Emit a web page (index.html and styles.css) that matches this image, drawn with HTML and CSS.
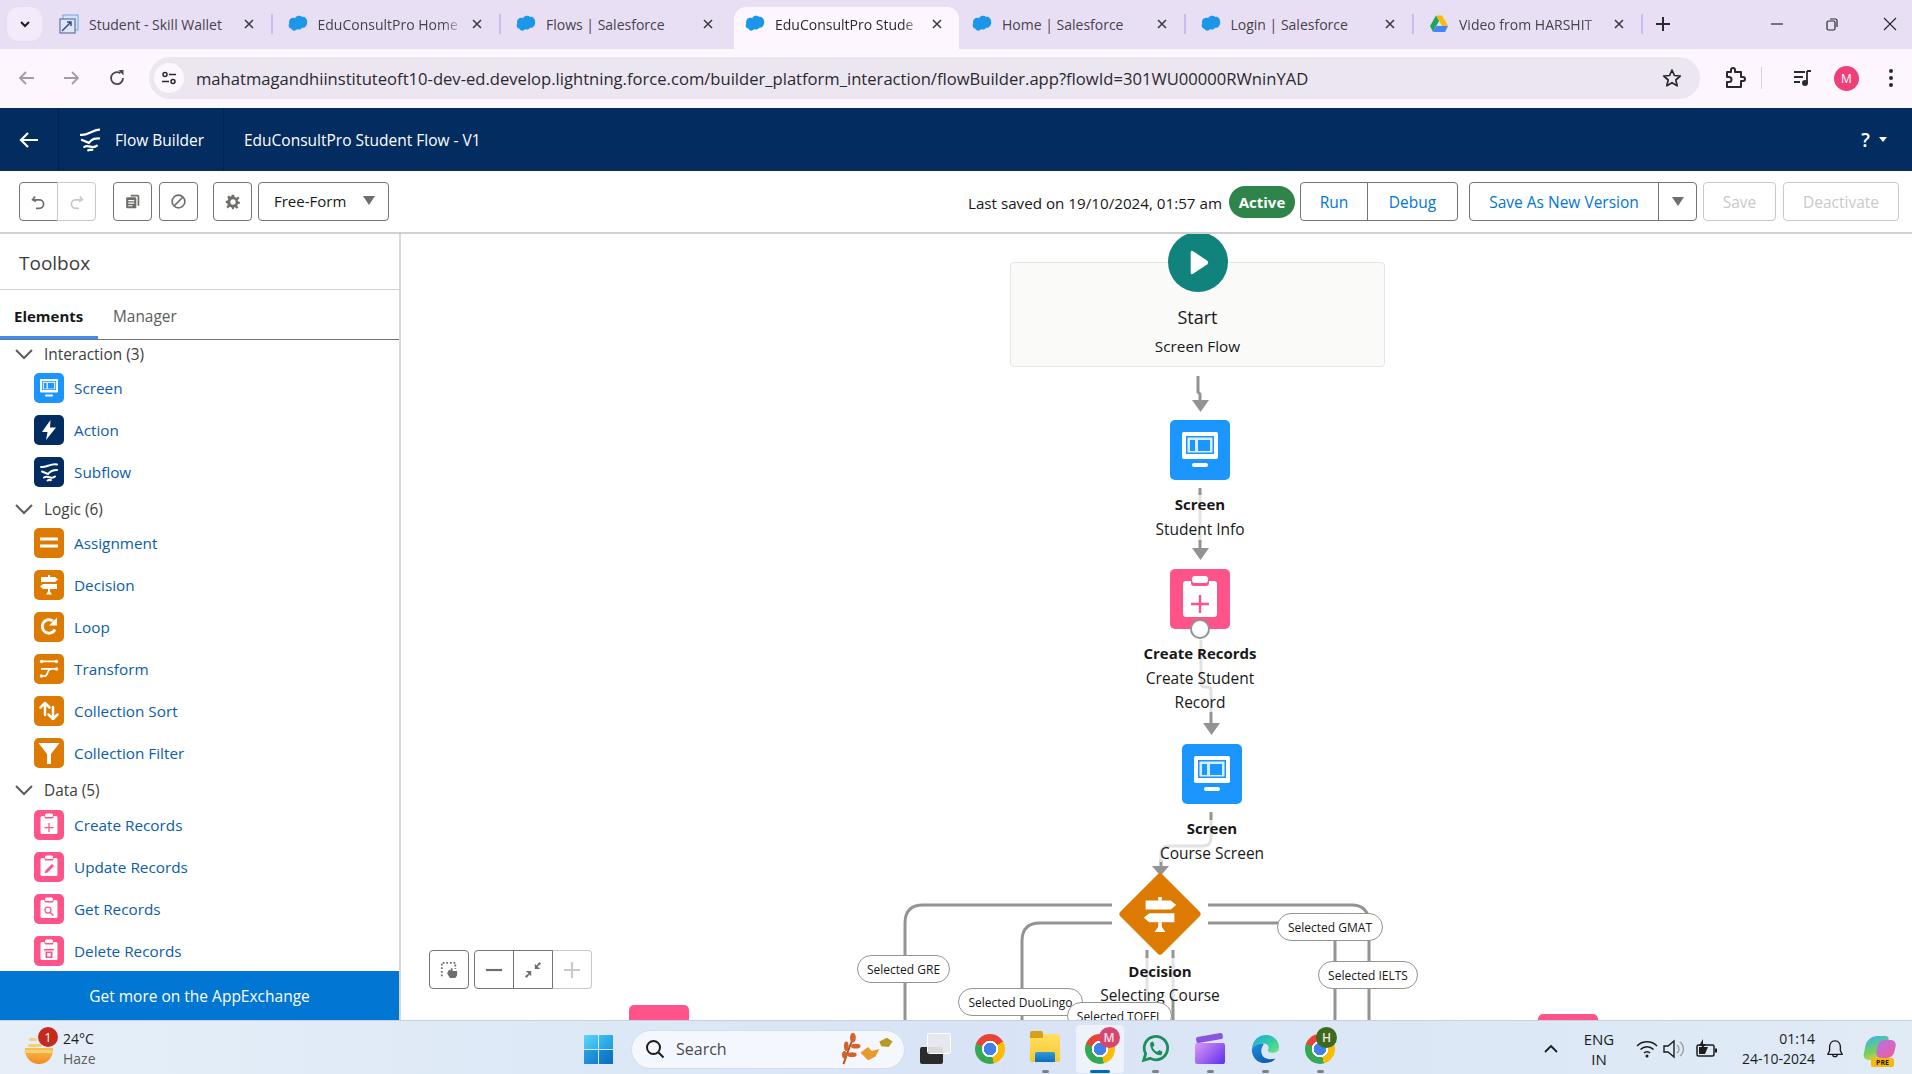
FILE: index.html
```html
<!DOCTYPE html>
<html lang="en">
<head>
<meta charset="utf-8">
<title>EduConsultPro Student Flow</title>
<link rel="stylesheet" href="styles.css">
</head>
<body>
<svg class="defs" xmlns="http://www.w3.org/2000/svg">
  <symbol id="i-cloud" viewBox="0 0 24 24"><path fill="#1b96e8" d="M9 4c2 -2.600 6 -2.600 8 -.5c3 -.5 6 2 6 6c0 4 -2 7.500 -6 7c-1.500 2.500 -4.500 2.500 -6 1.500c-2 3 -6 2.500 -7 -.5c-3 -.5 -4 -4 -2.500 -6.500c-1 -3 1.500 -6.500 4.500 -6.500c1 0 2 0 3 .5z"/></symbol>
  <symbol id="i-screen" viewBox="0 0 60 60"><rect x="12" y="12" width="36" height="27" rx="2" fill="#fff"/><rect x="16" y="16" width="28" height="18" fill="#1b96ff"/><rect x="17.500" y="17.500" width="25" height="15" fill="#d8ecff"/><rect x="20" y="20" width="5" height="11" fill="#1b96ff"/><rect x="28" y="20" width="12" height="11" fill="#1b96ff"/><rect x="22" y="43" width="16" height="4" rx="2" fill="#fff"/></symbol>
  <symbol id="i-bolt" viewBox="0 0 60 60"><path fill="#fff" d="M33 10 L16 34 H27 L24 50 L44 25 H32 Z"/></symbol>
  <symbol id="i-subflow" viewBox="0 0 60 60"><g fill="none" stroke="#fff" stroke-width="4" stroke-linecap="round"><path d="M14 20 C24 22 34 12 46 15"/><path d="M16 29 L28 34 C34 26 40 26 46 26"/><path d="M20 41 C28 36 34 46 42 39"/><path d="M27 47 C30 45 32 47 34 46"/></g></symbol>
  <symbol id="i-equals" viewBox="0 0 60 60"><rect x="12" y="19" width="36" height="6" fill="#fff"/><rect x="12" y="33" width="36" height="6" fill="#fff"/></symbol>
  <symbol id="i-decision" viewBox="0 0 60 60"><g fill="#fff"><rect x="28" y="10" width="4" height="4"/><path d="M14 14 H42 L48 19 L42 24 H14 Z"/><path d="M18 28 H46 V38 H18 L12 33 Z"/><rect x="28" y="38" width="4" height="6"/><path d="M28 43 H32 L36 49 H24 Z"/></g></symbol>
  <symbol id="i-loop" viewBox="0 0 60 60"><path fill="none" stroke="#fff" stroke-width="6" d="M42 35 A13.500 13.500 0 1 1 38 18"/><path fill="#fff" d="M46 11 V27 H30 Z"/></symbol>
  <symbol id="i-transform" viewBox="0 0 60 60"><g fill="#fff"><rect x="14" y="13" width="32" height="3.500"/><rect x="14" y="28" width="32" height="3.500"/><circle cx="15" cy="15" r="3.500"/><circle cx="45" cy="15" r="3.500"/><circle cx="45" cy="30" r="3.500"/><circle cx="15" cy="44" r="3.500"/></g><path fill="none" stroke="#fff" stroke-width="3.500" d="M15 44 H22 C28 44 26 30 34 30"/></symbol>
  <symbol id="i-sort" viewBox="0 0 60 60"><g fill="none" stroke="#fff" stroke-width="5" stroke-linecap="round" stroke-linejoin="round"><path d="M22 38 V14 M13 23 L22 14 L31 23"/><path d="M38 22 V46 M29 37 L38 46 L47 37"/></g></symbol>
  <symbol id="i-filter" viewBox="0 0 60 60"><path fill="#fff" d="M9 10 H51 L34 32 V52 H26 V32 Z"/></symbol>
  <symbol id="i-clip-plus" viewBox="0 0 60 60"><path fill="#fff" d="M13 15 a3 3 0 0 1 3 -3 h5 v2 a3 3 0 0 0 3 3 h12 a3 3 0 0 0 3 -3 v-2 h5 a3 3 0 0 1 3 3 v30 a3 3 0 0 1 -3 3 h-28 a3 3 0 0 1 -3 -3z"/><rect x="22" y="7" width="16" height="7" rx="3" fill="#fff"/><path stroke="#ff538a" stroke-width="2.500" d="M30 26 V44 M21 35 H39"/></symbol>
  <symbol id="i-clip-edit" viewBox="0 0 60 60"><path fill="#fff" d="M13 15 a3 3 0 0 1 3 -3 h5 v2 a3 3 0 0 0 3 3 h12 a3 3 0 0 0 3 -3 v-2 h5 a3 3 0 0 1 3 3 v30 a3 3 0 0 1 -3 3 h-28 a3 3 0 0 1 -3 -3z"/><rect x="22" y="7" width="16" height="7" rx="3" fill="#fff"/><path fill="#ff538a" d="M36 24 L40 28 L27 41 L21 43 L23 37 Z"/></symbol>
  <symbol id="i-clip-search" viewBox="0 0 60 60"><path fill="#fff" d="M13 15 a3 3 0 0 1 3 -3 h5 v2 a3 3 0 0 0 3 3 h12 a3 3 0 0 0 3 -3 v-2 h5 a3 3 0 0 1 3 3 v30 a3 3 0 0 1 -3 3 h-28 a3 3 0 0 1 -3 -3z"/><rect x="22" y="7" width="16" height="7" rx="3" fill="#fff"/><circle cx="28" cy="32" r="6" fill="none" stroke="#ff538a" stroke-width="2.500"/><path stroke="#ff538a" stroke-width="3" d="M32 37 L39 43"/></symbol>
  <symbol id="i-clip-trash" viewBox="0 0 60 60"><path fill="#fff" d="M13 15 a3 3 0 0 1 3 -3 h5 v2 a3 3 0 0 0 3 3 h12 a3 3 0 0 0 3 -3 v-2 h5 a3 3 0 0 1 3 3 v30 a3 3 0 0 1 -3 3 h-28 a3 3 0 0 1 -3 -3z"/><rect x="22" y="7" width="16" height="7" rx="3" fill="#fff"/><path fill="#ff538a" d="M20 26 H40 V29 H20 Z M23 31 H37 V44 H23 Z"/><rect x="26.500" y="34" width="7" height="7" fill="#fff"/></symbol>
  <symbol id="i-x" viewBox="0 0 12 12"><path fill="none" stroke="#3d3a42" stroke-width="1.600" d="M2 2 L10 10 M10 2 L2 10"/></symbol>
  <symbol id="i-chev" viewBox="0 0 18 12"><path fill="none" stroke="#5c5c5c" stroke-width="2" d="M1 2 L9 10 L17 2"/></symbol>
</svg>

<div class="tabstrip">
  <div class="tab-menu"><svg class="tab-menu-icon" viewBox="0 0 12 12"><path fill="none" stroke="#1d1b20" stroke-width="2" d="M2 4 L6 8 L10 4"/></svg></div>
  <div class="tab">
    <svg class="favicon" viewBox="0 0 20 20"><rect x="4" y="1" width="15" height="15" fill="#cfe3fa" stroke="#6ea8e8"/><rect x="1" y="5" width="15" height="14" fill="#dfe6f5" stroke="#4a5a94"/><path d="M3 17 L12 8 M8 8 H12 V12" fill="none" stroke="#3a4a84" stroke-width="1.500"/></svg>
    <span class="tab-text">Student - Skill Wallet</span><svg class="tab-x"><use href="#i-x"/></svg>
  </div>
  <div class="tab">
    <svg class="favicon"><use href="#i-cloud"/></svg><span class="tab-text tab-fade">EduConsultPro Home</span><svg class="tab-x"><use href="#i-x"/></svg>
  </div>
  <div class="tab tab-before-active">
    <svg class="favicon"><use href="#i-cloud"/></svg><span class="tab-text">Flows | Salesforce</span><svg class="tab-x"><use href="#i-x"/></svg>
  </div>
  <div class="tab tab-active">
    <svg class="favicon"><use href="#i-cloud"/></svg><span class="tab-text tab-fade">EduConsultPro Stude</span><svg class="tab-x"><use href="#i-x"/></svg>
  </div>
  <div class="tab">
    <svg class="favicon"><use href="#i-cloud"/></svg><span class="tab-text">Home | Salesforce</span><svg class="tab-x"><use href="#i-x"/></svg>
  </div>
  <div class="tab">
    <svg class="favicon"><use href="#i-cloud"/></svg><span class="tab-text">Login | Salesforce</span><svg class="tab-x"><use href="#i-x"/></svg>
  </div>
  <div class="tab">
    <svg class="favicon" viewBox="0 0 20 20"><path fill="#fbbc04" d="M7 1.500 H13 L19 12 H13 Z"/><path fill="#1fa463" d="M7 1.500 L1 12 L4 18 L10 7 Z"/><path fill="#4285f4" d="M4 18 H16 L19 12 H7.500 Z"/></svg>
    <span class="tab-text tab-fade">Video from HARSHIT</span><svg class="tab-x"><use href="#i-x"/></svg>
  </div>
  <svg class="tab-plus" viewBox="0 0 16 16"><path stroke="#2b2930" stroke-width="2" d="M8 1 V15 M1 8 H15"/></svg>
  <div class="window-controls">
    <svg class="win-btn" viewBox="0 0 16 16"><path stroke="#2b2930" stroke-width="1.200" d="M2 8 H14"/></svg>
    <svg class="win-btn" viewBox="0 0 16 16"><rect x="3" y="5" width="8" height="9" rx="1.500" fill="none" stroke="#2b2930" stroke-width="1.200"/><path fill="none" stroke="#2b2930" stroke-width="1.200" d="M6 3 H11.500 Q13 3 13 4.500 V11"/></svg>
    <svg class="win-btn" viewBox="0 0 16 16"><path stroke="#2b2930" stroke-width="1.200" d="M2 2 L14 14 M14 2 L2 14"/></svg>
  </div>
</div>

<div class="addressbar">
  <svg class="nav-icon nav-back" viewBox="0 0 20 20"><path fill="none" stroke="#a19ca8" stroke-width="1.800" d="M17 10 H3 M9 4 L3 10 L9 16"/></svg>
  <svg class="nav-icon nav-forward" viewBox="0 0 20 20"><path fill="none" stroke="#a19ca8" stroke-width="1.800" d="M3 10 H17 M11 4 L17 10 L11 16"/></svg>
  <svg class="nav-icon nav-reload" viewBox="0 0 20 20"><path fill="none" stroke="#47444d" stroke-width="1.800" d="M16 10 A6 6 0 1 1 13.500 5.200"/><path fill="#47444d" d="M11.500 2 H16.500 V7.500 Z"/></svg>
  <div class="omnibox">
    <div class="site-info"><svg class="site-icon" viewBox="0 0 16 16"><g fill="none" stroke="#2b2930" stroke-width="1.500"><circle cx="4" cy="4.500" r="2"/><path d="M8 4.500 H15 M1 11.500 H8"/><circle cx="12" cy="11.500" r="2"/></g></svg></div>
    <span class="url">mahatmagandhiinstituteoft10-dev-ed.develop.lightning.force.com/builder_platform_interaction/flowBuilder.app?flowId=301WU00000RWninYAD</span>
    <svg class="star" viewBox="0 0 20 20"><path fill="none" stroke="#2b2930" stroke-width="1.700" stroke-linejoin="round" d="M10 2 L12.400 7.500 L18.300 8 L13.800 12 L15.200 17.800 L10 14.700 L4.800 17.800 L6.200 12 L1.700 8 L7.600 7.500 Z"/></svg>
  </div>
  <svg class="ext-icon" viewBox="0 0 24 24"><path fill="none" stroke="#2b2930" stroke-width="2" stroke-linejoin="round" d="M5 6 H9 V4 A2 2 0 0 1 13 4 V6 H19 V11 H21 A2 2 0 0 1 21 15 H19 V21 H5 V16 H7 A2 2 0 0 0 7 11 H5 Z"/></svg>
  <span class="addr-sep"></span>
  <svg class="media-icon" viewBox="0 0 20 20"><path stroke="#2b2930" stroke-width="1.800" d="M1 4 H12 M1 9 H10 M1 14 H7"/><path stroke="#2b2930" stroke-width="1.800" d="M14 3 V14 M14 3 H18"/><circle cx="12" cy="15" r="3" fill="#2b2930"/></svg>
  <div class="avatar">M</div>
  <svg class="menu-dots" viewBox="0 0 6 20"><g fill="#2b2930"><circle cx="3" cy="3" r="2"/><circle cx="3" cy="10" r="2"/><circle cx="3" cy="17" r="2"/></g></svg>
</div>

<header class="app-header">
  <div class="hdr-back"><svg class="hdr-back-icon" viewBox="0 0 20 20"><path fill="none" stroke="#fff" stroke-width="2.200" d="M19 10 H2 M9 3 L2 10 L9 17"/></svg></div>
  <div class="hdr-brand"><svg class="hdr-brand-icon" viewBox="14 8 32 42"><g fill="none" stroke="#fff" stroke-width="4" stroke-linecap="round"><path d="M14 20 C24 22 34 12 46 11"/><path d="M16 29 L28 34 C34 26 40 26 46 26"/><path d="M20 41 C28 36 34 46 42 39"/><path d="M27 47 C30 45 32 47 34 46"/></g></svg><span>Flow Builder</span></div>
  <div class="hdr-title">EduConsultPro Student Flow - V1</div>
  <div class="hdr-help"><span class="hdr-q">?</span><span class="hdr-caret"></span></div>
</header>

<div class="toolbar">
  <div class="btn-group">
    <button class="tool tool-39"><svg class="tool-icon" viewBox="0 0 20 20"><path fill="none" stroke="#706e6b" stroke-width="2" d="M6 4 L3 8 L7 10 M3.500 8 H11 A5 5 0 0 1 11 18 H7"/></svg></button>
    <button class="tool tool-39 tool-off"><svg class="tool-icon" viewBox="0 0 20 20"><path fill="none" stroke="#c9c9c9" stroke-width="2" d="M14 4 L17 8 L13 10 M16.500 8 H9 A5 5 0 0 0 9 18 H13"/></svg></button>
  </div>
  <button class="tool tool-39 tool-solo tool-gap-17"><svg class="tool-icon" viewBox="0 0 20 20"><path fill="#706e6b" d="M8 2 H16 Q18 2 18 4 V15 H16 V4 H8 Z"/><path fill="#706e6b" d="M4 5 H13 Q14.500 5 14.500 6.500 V18 H4 Q2.500 18 2.500 16.500 V6.500 Q2.500 5 4 5 Z"/><path stroke="#fff" stroke-width="1.400" d="M5 9 H12 M5 12 H12 M5 15 H10"/></svg></button>
  <button class="tool tool-39 tool-solo tool-gap-7"><svg class="tool-icon" viewBox="0 0 20 20"><circle cx="10" cy="10" r="7.500" fill="none" stroke="#706e6b" stroke-width="2"/><path stroke="#706e6b" stroke-width="2" d="M15 5 L5 15"/></svg></button>
  <button class="tool tool-39 tool-solo tool-gap-15"><svg class="tool-icon tool-gear" viewBox="0 0 20 20"><path fill="#706e6b" d="M8.500 1 H11.500 L12 3.700 L14.300 4.700 L16.600 3.100 L18 5.500 L16 7.300 V9 L18.700 10 V12 L16 12.700 L15.200 14.800 L16.700 17 L14.500 18.500 L12.500 16.500 H11.500 L11 19 H9 L8 16.500 L5.800 16 L3.500 18 L1.800 16 L3.500 13.800 L3 12 L1 11 V8.500 L3.500 8 L4 5.800 L2.800 3.500 L5 2 L7.300 3.800 Z"/><circle cx="10" cy="10" r="3.300" fill="#fff"/></svg></button>
  <button class="select"><span>Free-Form</span><i class="caret"></i></button>
  <div class="toolbar-right">
    <span class="saved">Last saved on 19/10/2024, 01:57 am</span>
    <span class="badge">Active</span>
    <div class="btn-group group-run">
      <button class="brand-btn w-run">Run</button>
      <button class="brand-btn w-debug">Debug</button>
    </div>
    <div class="btn-group group-save">
      <button class="brand-btn w-saveas">Save As New Version</button>
      <button class="brand-btn w-more"><i class="caret"></i></button>
    </div>
    <button class="brand-btn solo-off w-save">Save</button>
    <button class="brand-btn solo-off w-deact">Deactivate</button>
  </div>
</div>

<main class="workspace">
  <aside class="sidebar">
    <h2 class="side-title">Toolbox</h2>
    <div class="side-tabs"><span class="side-tab side-tab-on">Elements</span><span class="side-tab">Manager</span></div>
    <div class="side-list">
      <div class="sec sec-first"><svg class="chev"><use href="#i-chev"/></svg><span>Interaction (3)</span></div>
      <div class="row"><svg class="ico ico-blue"><use href="#i-screen"/></svg><span>Screen</span></div>
      <div class="row"><svg class="ico ico-navy"><use href="#i-bolt"/></svg><span>Action</span></div>
      <div class="row"><svg class="ico ico-navy"><use href="#i-subflow"/></svg><span>Subflow</span></div>
      <div class="sec"><svg class="chev"><use href="#i-chev"/></svg><span>Logic (6)</span></div>
      <div class="row"><svg class="ico ico-orange"><use href="#i-equals"/></svg><span>Assignment</span></div>
      <div class="row"><svg class="ico ico-orange"><use href="#i-decision"/></svg><span>Decision</span></div>
      <div class="row"><svg class="ico ico-orange"><use href="#i-loop"/></svg><span>Loop</span></div>
      <div class="row"><svg class="ico ico-orange"><use href="#i-transform"/></svg><span>Transform</span></div>
      <div class="row"><svg class="ico ico-orange"><use href="#i-sort"/></svg><span>Collection Sort</span></div>
      <div class="row"><svg class="ico ico-orange"><use href="#i-filter"/></svg><span>Collection Filter</span></div>
      <div class="sec sec-data"><svg class="chev"><use href="#i-chev"/></svg><span>Data (5)</span></div>
      <div class="row"><svg class="ico ico-pink"><use href="#i-clip-plus"/></svg><span>Create Records</span></div>
      <div class="row"><svg class="ico ico-pink"><use href="#i-clip-edit"/></svg><span>Update Records</span></div>
      <div class="row"><svg class="ico ico-pink"><use href="#i-clip-search"/></svg><span>Get Records</span></div>
      <div class="row"><svg class="ico ico-pink"><use href="#i-clip-trash"/></svg><span>Delete Records</span></div>
    </div>
    <div class="side-footer">Get more on the AppExchange</div>
  </aside>

  <section class="canvas">
    <svg class="wires" viewBox="400 234 1512 786">
      <g class="wire-grey">
        <path d="M1198 376 V392 L1200 394 V402"/>
        <path d="M1200 488 V495"/>
        <path d="M1200 540 V552"/>
        <path d="M1211 712 V726"/>
        <path d="M1211 812 V820"/>
        <path d="M1161 860 V868"/>
        <path d="M1112 905 H923 Q905 905 905 923 V1020"/>
        <path d="M1112 923 H1040 Q1022 923 1022 941 V1020"/>
        <path d="M1208 905 H1352 Q1366 905 1369 919 V1020"/>
        <path d="M1208 923 H1290"/>
        <path d="M1335 935 V1020"/>
        <path d="M1147 950 V958"/>
        <path d="M1173 950 V958"/>
        <path d="M1173 1000 V1020"/>
      </g>
      <g class="wire-light">
        <path d="M1200 495 V540"/>
        <path d="M1201 640 V683 Q1201 687 1205 687 H1207 Q1211 687 1211 691 V712"/>
        <path d="M1211 820 V838 Q1211 846 1203 846 H1169 Q1161 846 1161 854 V862"/>
        <path d="M1147 958 V1020"/>
        <path d="M1173 958 V1000"/>
      </g>
      <g class="wire-head">
        <polygon points="1192,400 1209,400 1200.500,412"/>
        <polygon points="1192,548 1209,548 1200.500,560"/>
        <polygon points="1203,723 1220,723 1211.500,735"/>
        <polygon points="1152,866 1169,866 1160.500,876"/>
      </g>
    </svg>

    <div class="start-box"><div class="start-name">Start</div><div class="start-type">Screen Flow</div></div>
    <div class="play"><svg class="play-icon" viewBox="0 0 24 30"><path fill="#fff" d="M2 3 Q2 0 5 1.500 L22 13 Q24 15 22 17 L5 28.500 Q2 30 2 27 Z"/></svg></div>

    <div class="node n-screen1"><svg class="node-icon ico-blue"><use href="#i-screen"/></svg><div class="node-title">Screen</div><div class="node-desc">Student Info</div></div>
    <div class="node n-create"><svg class="node-icon ico-pink"><use href="#i-clip-plus"/></svg><div class="node-title">Create Records</div><div class="node-desc">Create Student Record</div></div>
    <span class="port"></span>
    <div class="node n-screen2"><svg class="node-icon ico-blue"><use href="#i-screen"/></svg><div class="node-title">Screen</div><div class="node-desc">Course Screen</div></div>
    <div class="node n-decision">
      <svg class="diamond" viewBox="0 0 82 82"><polygon points="41,4 78,41 41,78 4,41" fill="#dd7a01" stroke="#dd7a01" stroke-width="7" stroke-linejoin="round"/><use href="#i-decision" x="14" y="15" width="54" height="54"/></svg>
      <div class="node-title">Decision</div><div class="node-desc">Selecting Course</div>
    </div>

    <span class="pill p-gre">Selected GRE</span>
    <span class="pill p-duo">Selected DuoLingo</span>
    <span class="pill p-toefl">Selected TOEFL</span>
    <span class="pill p-gmat">Selected GMAT</span>
    <span class="pill p-ielts">Selected IELTS</span>
    <div class="stub stub-left"></div>
    <div class="stub stub-right"></div>

    <div class="canvas-controls">
      <button class="ctl ctl-solo"><svg class="ctl-icon" viewBox="0 0 20 20"><path fill="none" stroke="#706e6b" stroke-width="2" stroke-dasharray="2 2" d="M2 17 V2 H17 V9"/><path fill="#706e6b" d="M9 11 L11 9.500 L12 11 V8 H14 V11 H19 V16 L17 19 H11 L8 14 Z"/></svg></button>
      <div class="ctl-group">
        <button class="ctl"><svg class="ctl-icon" viewBox="0 0 20 20"><path stroke="#706e6b" stroke-width="2.400" d="M1 10 H19"/></svg></button>
        <button class="ctl"><svg class="ctl-icon" viewBox="0 0 20 20"><g fill="#706e6b"><path d="M12 3 V9 H18 L15 6 L19 3 L17 1 L14 5 Z"/><path d="M8 17 V11 H2 L5 14 L1 17 L3 19 L6 15 Z"/></g></svg></button>
        <button class="ctl ctl-off"><svg class="ctl-icon" viewBox="0 0 20 20"><path stroke="#c9c9c9" stroke-width="2.400" d="M1 10 H19 M10 1 V19"/></svg></button>
      </div>
    </div>
  </section>
</main>

<footer class="taskbar">
  <div class="weather">
    <div class="sun"><span class="sun-bar b1"></span><span class="sun-bar b2"></span><span class="sun-bar b3"></span></div>
    <span class="weather-badge">1</span>
    <div class="weather-text"><span class="temp">24°C</span><span class="haze">Haze</span></div>
  </div>
  <div class="winlogo"><span class="pane pane-a"></span><span class="pane pane-b"></span><span class="pane pane-c"></span><span class="pane pane-d"></span></div>
  <div class="search">
    <svg class="search-icon" viewBox="0 0 20 20"><circle cx="8.500" cy="8.500" r="6.500" fill="none" stroke="#1c1c1c" stroke-width="2"/><path stroke="#1c1c1c" stroke-width="2" d="M13 13 L18.500 18.500"/></svg>
    <span class="search-text">Search</span>
    <svg class="leaves" viewBox="0 0 60 36"><path fill="none" stroke="#b5521b" stroke-width="2" d="M4 34 C8 24 10 14 16 4"/><g fill="#d4632a"><ellipse cx="14" cy="6" rx="3" ry="5"/><ellipse cx="7" cy="15" rx="2.500" ry="5"/><ellipse cx="17" cy="15" rx="5" ry="2.500"/><ellipse cx="5" cy="24" rx="2.500" ry="4"/><ellipse cx="13" cy="24" rx="5" ry="2.500"/></g><path fill="#e89a2e" d="M22 22 L30 16 L34 20 L42 18 L38 26 L30 30 L26 26 Z"/><path fill="#b79a24" d="M42 10 L50 6 L56 10 L52 16 L44 15 Z"/></svg>
  </div>
  <div class="task-icons">
    <div class="task"><div class="taskview"><span class="tv-back"></span><span class="tv-front"></span></div></div>
    <div class="task"><span class="chrome"></span></div>
    <div class="task task-dot"><div class="folder"><span class="folder-tab"></span><span class="folder-slot"></span></div></div>
    <div class="task task-on"><span class="chrome"></span><span class="prof prof-m">M</span></div>
    <div class="task task-dot"><svg class="wa" viewBox="0 0 32 32"><path fill="none" stroke="#1e8f5a" stroke-width="3" d="M4 28 L6 21 A12.500 12.500 0 1 1 11 26 Z"/><path fill="#1e8f5a" d="M11 9 L14 8 L15.500 12 L13.500 14 C14.500 16.500 16 18 18.500 19 L20.500 17 L24 19 L23 22.500 C17 24 9.500 16 11 9 Z"/></svg></div>
    <div class="task task-dot"><div class="clip"><span class="clip-top"></span><span class="clip-body"></span></div></div>
    <div class="task task-dot"><svg class="edge" viewBox="0 0 32 32"><defs><linearGradient id="edge-a" x1="0" y1="0" x2="1" y2="1"><stop offset="0" stop-color="#1fa8e0"/><stop offset=".6" stop-color="#36d0a0"/><stop offset="1" stop-color="#7be27a"/></linearGradient><linearGradient id="edge-b" x1="0" y1="0" x2="1" y2="1"><stop offset="0" stop-color="#1f8fe0"/><stop offset="1" stop-color="#0b4f9e"/></linearGradient></defs><path fill="url(#edge-a)" d="M2 17 C2 7 9 1 17 1 C25 1 31 7 31 14 C31 18 28 20 24 20 C20 20 19 18 19 17 C21 15 20 10 14 10 C8 10 2 13 2 17 Z"/><path fill="url(#edge-b)" d="M2 17 C2 26 9 31 16 31 C21 31 25 29 27 26 C22 28 12 27 12 18 C12 13 16 11 14 10 C8 10 2 13 2 17 Z"/></svg></div>
    <div class="task task-dot"><span class="chrome"></span><span class="prof prof-h">H</span></div>
  </div>
  <div class="tray">
    <svg class="tray-chev" viewBox="0 0 16 10"><path fill="none" stroke="#1c1c1c" stroke-width="1.800" d="M2 8 L8 2 L14 8"/></svg>
    <div class="tray-lang">ENG<br>IN</div>
    <svg class="tray-ico tray-wifi" viewBox="0 0 22 20"><g fill="none" stroke="#1c1c1c" stroke-width="1.500"><path d="M1 7 A14 14 0 0 1 21 7"/><path d="M4.500 10.500 A9 9 0 0 1 17.500 10.500"/><path d="M8 14 A4 4 0 0 1 14 14"/></g><circle cx="11" cy="17" r="1.500" fill="#1c1c1c"/></svg>
    <svg class="tray-ico tray-vol" viewBox="0 0 22 20"><path fill="none" stroke="#1c1c1c" stroke-width="1.400" d="M1 7 H5 L11 2 V18 L5 13 H1 Z"/><path fill="none" stroke="#9a9a9a" stroke-width="1.300" d="M14 6 A5 5 0 0 1 14 14 M17 3 A9 9 0 0 1 17 17"/></svg>
    <svg class="tray-ico tray-batt" viewBox="0 0 22 20"><rect x="1" y="6" width="17" height="11" rx="1.500" fill="none" stroke="#1c1c1c" stroke-width="1.500"/><rect x="19" y="9.500" width="2" height="4" fill="#1c1c1c"/><path fill="#1c1c1c" d="M3 8 H12 L9 15 H3 Z"/><path fill="#1c1c1c" d="M7 0 L3 7 H6 L5 11 L10 5 H7 Z"/></svg>
    <div class="clock"><span>01:14</span><span>24-10-2024</span></div>
    <svg class="bell" viewBox="0 0 20 22"><path fill="none" stroke="#1c1c1c" stroke-width="1.500" stroke-linejoin="round" d="M10 2 C5.500 2 4 6 4 9 V13 L2 17 H18 L16 13 V9 C16 6 14.500 2 10 2 Z M7.500 17 A2.500 2.500 0 0 0 12.500 17"/></svg>
    <div class="copilot"><span class="cop-a"></span><span class="cop-b"></span><span class="cop-pre">PRE</span></div>
  </div>
</footer>
</body>
</html>
```

FILE: styles.css
```css
* { box-sizing: border-box; }
html, body { margin: 0; height: 100%; }
body {
  width: 1912px;
  height: 1074px;
  overflow: hidden;
  display: flex;
  flex-direction: column;
  font-family: "Open Sans", "Noto Sans", sans-serif;
  color: #181818;
  background: #fff;
}
button { font: inherit; background: #fff; cursor: default; padding: 0; margin: 0; }
.defs { display: none; }

/* browser tabs */
.tabstrip {
  height: 49px;
  flex: none;
  background: #e9dff5;
  display: flex;
  padding-left: 7px;
}
.tab-menu {
  width: 35px;
  height: 34px;
  margin: 7px 4px 0 0;
  background: #f3ebf9;
  border-radius: 12px;
  display: flex;
  align-items: center;
  justify-content: center;
}
.tab-menu-icon { width: 12px; height: 12px; }
.tab {
  width: 228.500px;
  height: 42px;
  margin-top: 7px;
  padding: 0 18px 8px 13px;
  display: flex;
  align-items: center;
  border-right: 2px solid transparent;
  background: linear-gradient(#cbbcf0, #cbbcf0) right 7px / 2px 20px no-repeat;
}
.tab-before-active { background: none; width: 231px; }
.tab-active { width: 225px; background: #fdf6fe; border-radius: 12px 12px 0 0; padding: 0 14px 8px 11px; }
.favicon { width: 20px; height: 20px; flex: none; }
.tab-text {
  flex: 1;
  min-width: 0;
  margin-left: 10px;
  white-space: nowrap;
  font-size: 14px;
  color: #45424b;
}
.tab-fade {
  -webkit-mask-image: linear-gradient(90deg, #000 84%, transparent 98%);
  mask-image: linear-gradient(90deg, #000 84%, transparent 98%);
}
.tab-active .tab-text { color: #2b2930; }
.tab-x { width: 12px; height: 12px; flex: none; margin-left: 4px; }
.tab-plus { width: 16px; height: 16px; margin: 16px 0 0 10px; flex: none; }
.window-controls { margin-left: auto; display: flex; gap: 42px; padding: 16px 14px 0 0; }
.win-btn { width: 16px; height: 16px; }
.win-btn:first-child { margin-right: -3px; }

/* address bar */
.addressbar {
  height: 59px;
  flex: none;
  background: #fdf6fe;
  display: flex;
  align-items: center;
  padding-bottom: 1px;
}
.nav-icon { width: 20px; height: 20px; flex: none; }
.nav-back { margin-left: 17px; }
.nav-forward { margin-left: 24px; }
.nav-reload { margin-left: 26px; }
.omnibox {
  width: 1551px;
  height: 42px;
  margin-left: 22px;
  border-radius: 21px;
  background: #ece6f0;
  display: flex;
  align-items: center;
  padding: 0 18px 0 5px;
}
.site-info {
  width: 30px;
  height: 30px;
  border-radius: 50%;
  background: #fdf6fe;
  display: flex;
  align-items: center;
  justify-content: center;
}
.site-icon { width: 16px; height: 16px; }
.url { margin-left: 12px; font-size: 16.600px; color: #2b2930; white-space: nowrap; flex: 1; }
.star { width: 20px; height: 20px; flex: none; }
.ext-icon { width: 24px; height: 24px; margin-left: 22px; flex: none; }
.addr-sep { width: 1px; height: 22px; background: #d8d0de; margin-left: 15px; }
.media-icon { width: 20px; height: 20px; margin-left: 31px; flex: none; }
.avatar {
  width: 25px;
  height: 25px;
  margin-left: 21px;
  border-radius: 50%;
  background: #ee3f78;
  color: #fff;
  font-size: 12px;
  display: flex;
  align-items: center;
  justify-content: center;
}
.menu-dots { width: 6px; height: 20px; margin-left: 29px; }

/* app header */
.app-header {
  height: 63px;
  flex: none;
  background: #032d60;
  color: #fff;
  display: flex;
  align-items: center;
  font-size: 15.500px;
}
.hdr-back {
  width: 59px;
  height: 100%;
  border-right: 1px solid #01224a;
  display: flex;
  align-items: center;
  justify-content: center;
}
.hdr-back-icon { width: 20px; height: 20px; }
.hdr-brand {
  width: 165px;
  height: 100%;
  border-right: 1px solid #01224a;
  display: flex;
  align-items: center;
  padding-left: 21px;
  padding-top: 1px;
  gap: 15px;
}
.hdr-brand-icon { width: 20px; height: 24px; }
.hdr-title { margin-left: 20px; padding-top: 1px; }
.hdr-help { margin-left: auto; padding-right: 25px; display: flex; align-items: center; gap: 8px; }
.hdr-q { font-size: 19px; font-weight: 600; margin-right: 1px; }
.hdr-caret { width: 0; height: 0; border: 4px solid transparent; border-top: 5px solid #fff; border-bottom: 0; }

/* toolbar */
.toolbar {
  height: 63px;
  flex: none;
  border-bottom: 2px solid #d0d0d0;
  display: flex;
  align-items: flex-start;
  padding: 11px 13px 0 19px;
}
.btn-group { display: flex; }
.btn-group > button { border-radius: 0; margin-left: -1px; }
.btn-group > button:first-child { border-radius: 4px 0 0 4px; margin-left: 0; }
.btn-group > button:last-child { border-radius: 0 4px 4px 0; }
.tool {
  height: 39px;
  border: 1px solid #747474;
  display: flex;
  align-items: center;
  justify-content: center;
}
.tool-39 { width: 39px; }
.tool-off { border-color: #c9c9c9; }
.tool-solo { border-radius: 4px; }
.tool-gap-17 { margin-left: 17px; }
.tool-gap-7 { margin-left: 7px; }
.tool-gap-15 { margin-left: 15px; }
.tool-icon { width: 17px; height: 17px; }
.tool-gear { width: 16px; height: 16px; }
.select {
  width: 131px;
  height: 39px;
  margin-left: 6px;
  border: 1px solid #747474;
  border-radius: 4px;
  display: flex;
  align-items: center;
  justify-content: space-between;
  padding: 0 13px 2px 15px;
  font-size: 15px;
  color: #181818;
}
.caret { display: block; width: 0; height: 0; border: 6.500px solid transparent; border-top: 9px solid #706e6b; border-bottom: 0; }
.toolbar-right { margin-left: auto; display: flex; align-items: center; height: 39px; }
.saved { font-size: 15.200px; white-space: nowrap; padding-top: 3px; }
.badge {
  margin-left: 7px;
  width: 66px;
  height: 32px;
  border-radius: 16px;
  background: #2e844a;
  color: #fff;
  font-weight: 700;
  font-size: 15px;
  display: flex;
  align-items: center;
  justify-content: center;
}
.group-run { margin-left: 5px; }
.group-save { margin-left: 11px; }
.brand-btn {
  height: 39px;
  border: 1px solid #747474;
  color: #0176d3;
  font-size: 15.500px;
  display: flex;
  align-items: center;
  justify-content: center;
}
.w-run { width: 68px; }
.w-debug { width: 91px; }
.w-saveas { width: 190px; }
.w-more { width: 39px; }
.solo-off { border-color: #c9c9c9; color: #c9c9c9; border-radius: 4px; }
.w-save { width: 73px; margin-left: 6px; }
.w-deact { width: 116px; margin-left: 7px; }

/* workspace */
.workspace { flex: 1; min-height: 0; display: flex; }
.sidebar {
  width: 399px;
  margin-right: 1px;
  flex: none;
  display: flex;
  flex-direction: column;
  background: #fff;
  position: relative;
  z-index: 1;
  box-shadow: 2px 0 0 #d8d8d8;
}
.side-title {
  margin: 0;
  height: 56px;
  flex: none;
  border-bottom: 1px solid #d0d0d0;
  display: flex;
  align-items: center;
  padding-left: 19px;
  padding-top: 2px;
  font-size: 19px;
  font-weight: 400;
  color: #3e3e3c;
}
.side-tabs {
  height: 50px;
  flex: none;
  display: flex;
  border-bottom: 1px solid #747474;
}
.side-tab { padding: 16px 0 0 0; font-size: 15.400px; color: #5c5c5c; margin-left: 15px; }
.side-tab-on {
  width: 98px;
  margin: 0;
  padding-left: 14px;
  font-size: 15px;
  font-weight: 700;
  color: #181818;
  box-shadow: inset 0 -3px 0 #3b8df0;
}
.side-list { flex: 1; min-height: 0; overflow: hidden; }
.sec {
  height: 29px;
  padding-top: 3px;
  padding-left: 15px;
  display: flex;
  align-items: center;
  font-size: 15.400px;
  color: #3e3e3c;
}
.sec-first { height: 27px; padding-top: 1px; }
.sec-data { height: 30px; padding-top: 2px; }
.chev { width: 18px; height: 12px; margin-right: 11px; flex: none; }
.row {
  height: 42px;
  padding-left: 34px;
  display: flex;
  align-items: center;
  gap: 10px;
  font-size: 15.300px;
  color: #0b5cab;
}
.ico { width: 30px; height: 30px; border-radius: 5px; flex: none; }
.ico-blue { background: #1b96ff; }
.ico-navy { background: #032d60; }
.ico-orange { background: #dd7a01; }
.ico-pink { background: #ff538a; }
.side-footer {
  height: 49px;
  flex: none;
  background: #0176d3;
  color: #fff;
  font-size: 15.500px;
  display: flex;
  align-items: center;
  justify-content: center;
}

/* flow canvas */
.canvas { flex: 1; position: relative; overflow: hidden; background: #fff; }
.wires { position: absolute; left: 0; top: 0; width: 1512px; height: 786px; }
.wire-grey path { fill: none; stroke: #939393; stroke-width: 3; }
.wire-light path { fill: none; stroke: #e2e2e2; stroke-width: 3; }
.wire-head polygon { fill: #939393; }
.start-box {
  position: absolute;
  left: 610px;
  top: 28px;
  width: 375px;
  height: 105px;
  background: #fafaf9;
  border: 1px solid #e5e5e5;
  border-radius: 4px;
  text-align: center;
  padding-top: 41px;
}
.start-name { font-size: 18px; line-height: 26px; height: 30px; }
.start-type { font-size: 15.300px; line-height: 24px; }
.play {
  position: absolute;
  left: 768px;
  top: -2px;
  width: 60px;
  height: 60px;
  border-radius: 50%;
  background: #0f837c;
  display: flex;
  align-items: center;
  justify-content: center;
}
.play-icon { width: 20px; height: 29px; margin-left: 1px; }
.node {
  position: absolute;
  width: 180px;
  display: flex;
  flex-direction: column;
  align-items: center;
  text-align: center;
  line-height: 24px;
}
.node-icon { width: 60px; height: 60px; border-radius: 5px; flex: none; margin-bottom: 12px; }
.node-title { font-weight: 700; font-size: 15px; }
.node-desc { font-size: 15.500px; max-width: 130px; margin-top: 1px; }
.n-screen1 { left: 710px; top: 186px; }
.n-create { left: 710px; top: 335px; }
.n-screen2 { left: 722px; top: 510px; }
.n-decision { left: 670px; top: 639px; }
.n-decision .node-desc { margin-top: 0; }
.diamond { width: 82px; height: 82px; flex: none; margin-bottom: 4px; }
.port {
  position: absolute;
  left: 790px;
  top: 385px;
  width: 20px;
  height: 20px;
  border-radius: 50%;
  background: #fff;
  border: 2px solid #939393;
}
.pill {
  position: absolute;
  height: 28px;
  border: 1px solid #939393;
  border-radius: 14px;
  background: #fff;
  font-size: 12px;
  display: flex;
  align-items: center;
  justify-content: center;
  white-space: nowrap;
}
.p-gre { left: 457px; top: 721px; width: 93px; }
.p-duo { left: 558px; top: 754px; width: 125px; }
.p-toefl { left: 667px; top: 768px; width: 105px; }
.p-gmat { left: 877px; top: 679px; width: 106px; }
.p-ielts { left: 918px; top: 727px; width: 100px; }
.stub { position: absolute; width: 60px; height: 60px; background: #ff538a; border-radius: 5px; }
.stub-left { left: 229px; top: 771px; }
.stub-right { left: 1138px; top: 780px; }

.canvas-controls {
  position: absolute;
  left: 29px;
  top: 716px;
  display: flex;
  gap: 5px;
}
.ctl {
  width: 40px;
  height: 39px;
  border: 1px solid #747474;
  margin-left: -1px;
  display: flex;
  align-items: center;
  justify-content: center;
}
.ctl-solo { border-radius: 4px; margin-left: 0; }
.ctl-group { display: flex; }
.ctl-group .ctl:first-child { border-radius: 4px 0 0 4px; margin-left: 0; }
.ctl-group .ctl:last-child { border-radius: 0 4px 4px 0; }
.ctl-off { border-color: #c9c9c9; border-left-color: #747474; }
.ctl-icon { width: 18px; height: 18px; }

/* taskbar */
.taskbar {
  height: 54px;
  flex: none;
  padding-top: 3px;
  background: linear-gradient(90deg, #e6eff8, #d8e4f6 50%, #e0ebf6);
  border-top: 1px solid #c8d0da;
  display: flex;
  align-items: center;
}
.weather { width: 584px; display: flex; align-items: center; position: relative; padding-left: 24px; height: 100%; flex: none; }
.sun { width: 30px; height: 30px; position: relative; margin-top: 4px; }
.sun::before {
  content: "";
  position: absolute;
  left: 1px;
  right: 1px;
  bottom: 2px;
  height: 16px;
  background: linear-gradient(#f9c04a, #f08a24);
  border-radius: 0 0 15px 15px;
}
.sun-bar { position: absolute; height: 3px; background: #f6cf7a; border-radius: 2px; }
.b1 { left: 5px; top: 2px; width: 8px; }
.b2 { left: 4px; top: 8px; width: 14px; }
.b3 { left: 0; top: 14px; width: 29px; }
.weather-badge {
  position: absolute;
  left: 38px;
  top: 3px;
  width: 20px;
  height: 20px;
  border-radius: 50%;
  background: #c42b1c;
  color: #fff;
  font-size: 13px;
  display: flex;
  align-items: center;
  justify-content: center;
}
.weather-text { display: flex; flex-direction: column; margin-left: 9px; font-size: 14px; line-height: 20px; }
.temp { color: #1c1c1c; }
.haze { color: #5c5c5c; }
.winlogo {
  width: 29px;
  height: 29px;
  flex: none;
  display: grid;
  grid-template-columns: 1fr 1fr;
  gap: 1px;
}
.pane-a { background: linear-gradient(135deg, #5fd6f7, #2fb0ec); }
.pane-b { background: linear-gradient(135deg, #3fbdf0, #1c9ae0); }
.pane-c { background: linear-gradient(135deg, #2aa0e4, #137fd0); }
.pane-d { background: linear-gradient(135deg, #1a8ad6, #0c6cc0); }
.search {
  width: 274px;
  height: 39px;
  margin-left: 18px;
  flex: none;
  border-radius: 20px;
  background: #f4f7fd;
  border: 1px solid #d6deea;
  display: flex;
  align-items: center;
  padding: 0 6px 0 13px;
}
.search-icon { width: 20px; height: 20px; flex: none; }
.search-text { margin-left: 11px; font-size: 16px; color: #4a4a4a; }
.leaves { width: 60px; height: 34px; margin-left: auto; flex: none; }
.task-icons { display: flex; margin-left: 2px; flex: none; }
.task {
  width: 55px;
  height: 48px;
  position: relative;
  display: flex;
  align-items: center;
  justify-content: center;
}
.task-dot::after, .task-on::after {
  content: "";
  position: absolute;
  left: 50%;
  margin-left: -3px;
  bottom: 0;
  width: 7px;
  height: 3px;
  border-radius: 2px;
  background: #7d8288;
}
.task-on { background: #eef3fa; border-radius: 4px; width: 48px; margin: 0 3.500px; }
.task-on::after { width: 20px; margin-left: -10px; background: #0067c0; }
.chrome {
  display: block;
  width: 30px;
  height: 30px;
  border-radius: 50%;
  background:
    radial-gradient(circle, #3f80ea 0 6px, #fff 6.500px 8px, transparent 8.500px),
    conic-gradient(from -70deg, #ea4335 0 130deg, #fbbc05 130deg 235deg, #34a853 235deg 360deg);
}
.prof {
  position: absolute;
  width: 21px;
  height: 21px;
  top: 2px;
  right: 4px;
  border-radius: 50%;
  font-size: 12px;
  font-weight: 600;
  color: #f4e4e8;
  display: flex;
  align-items: center;
  justify-content: center;
}
.prof-m { background: #d8456f; }
.prof-h { background: #3c6a1e; right: 10px; }
.taskview { width: 30px; height: 30px; position: relative; }
.tv-back { position: absolute; left: 0; bottom: 0; width: 23px; height: 17px; background: #2b2b2b; border-radius: 2px; }
.tv-front { position: absolute; right: 0; top: 0; width: 22px; height: 19px; background: rgba(232, 232, 236, .92); border-radius: 2px; box-shadow: 0 0 0 1px #fff; }
.folder { width: 30px; height: 28px; position: relative; background: linear-gradient(#ffdf62, #f9c830); border-radius: 2px; margin-top: -2px; }
.folder-tab { position: absolute; left: 0; top: -3px; width: 13px; height: 7px; background: #d8a118; border-radius: 2px 2px 0 0; }
.folder-slot { position: absolute; left: 5px; right: 5px; bottom: 0; height: 10px; background: linear-gradient(#2f9bde, #0f6cb8); border-radius: 2px 2px 0 0; }
.wa { width: 30px; height: 30px; }
.clip { width: 30px; height: 30px; position: relative; }
.clip-top { position: absolute; left: 1px; top: 1px; width: 27px; height: 6px; background: #8a54e0; transform: rotate(-10deg); border-radius: 2px; }
.clip-body { position: absolute; left: 0; top: 9px; width: 30px; height: 21px; background: linear-gradient(135deg, #d99af5, #a568f0 45%, #5a2ff0); border-radius: 2px; }
.edge { width: 30px; height: 30px; }
.tray { display: flex; align-items: center; margin-left: auto; height: 100%; }
.tray-chev { width: 16px; height: 10px; margin-right: 24px; flex: none; }
.tray-lang { width: 32px; text-align: center; font-size: 15px; line-height: 20px; color: #1c1c1c; margin-right: 21px; }
.tray-ico { width: 22px; height: 20px; flex: none; }
.tray-wifi { margin-right: 5px; }
.tray-vol { margin-right: 11px; }
.tray-batt { margin-right: 7px; }
.clock { display: flex; flex-direction: column; align-items: flex-end; font-size: 14px; line-height: 20px; width: 90px; color: #1c1c1c; }
.bell { width: 18px; height: 20px; margin-left: 11px; flex: none; }
.copilot { width: 30px; height: 30px; margin: 0 17px 0 21px; position: relative; flex: none; }
.cop-a { position: absolute; left: 0; top: 2px; width: 22px; height: 24px; border-radius: 9px 4px 8px 6px; background: linear-gradient(160deg, #2fb8f0, #7ccf5a 60%, #f2d34a); transform: skewX(-12deg); }
.cop-b { position: absolute; right: 0; top: 6px; width: 18px; height: 18px; border-radius: 6px; background: linear-gradient(140deg, #b86fe8, #f0609a); transform: skewX(-12deg); }
.cop-pre { position: absolute; left: 6px; bottom: -3px; width: 23px; height: 9px; background: #f7b90f; border-radius: 2px; color: #1c1c1c; font-size: 7px; font-weight: 700; line-height: 9px; text-align: center; }
```
